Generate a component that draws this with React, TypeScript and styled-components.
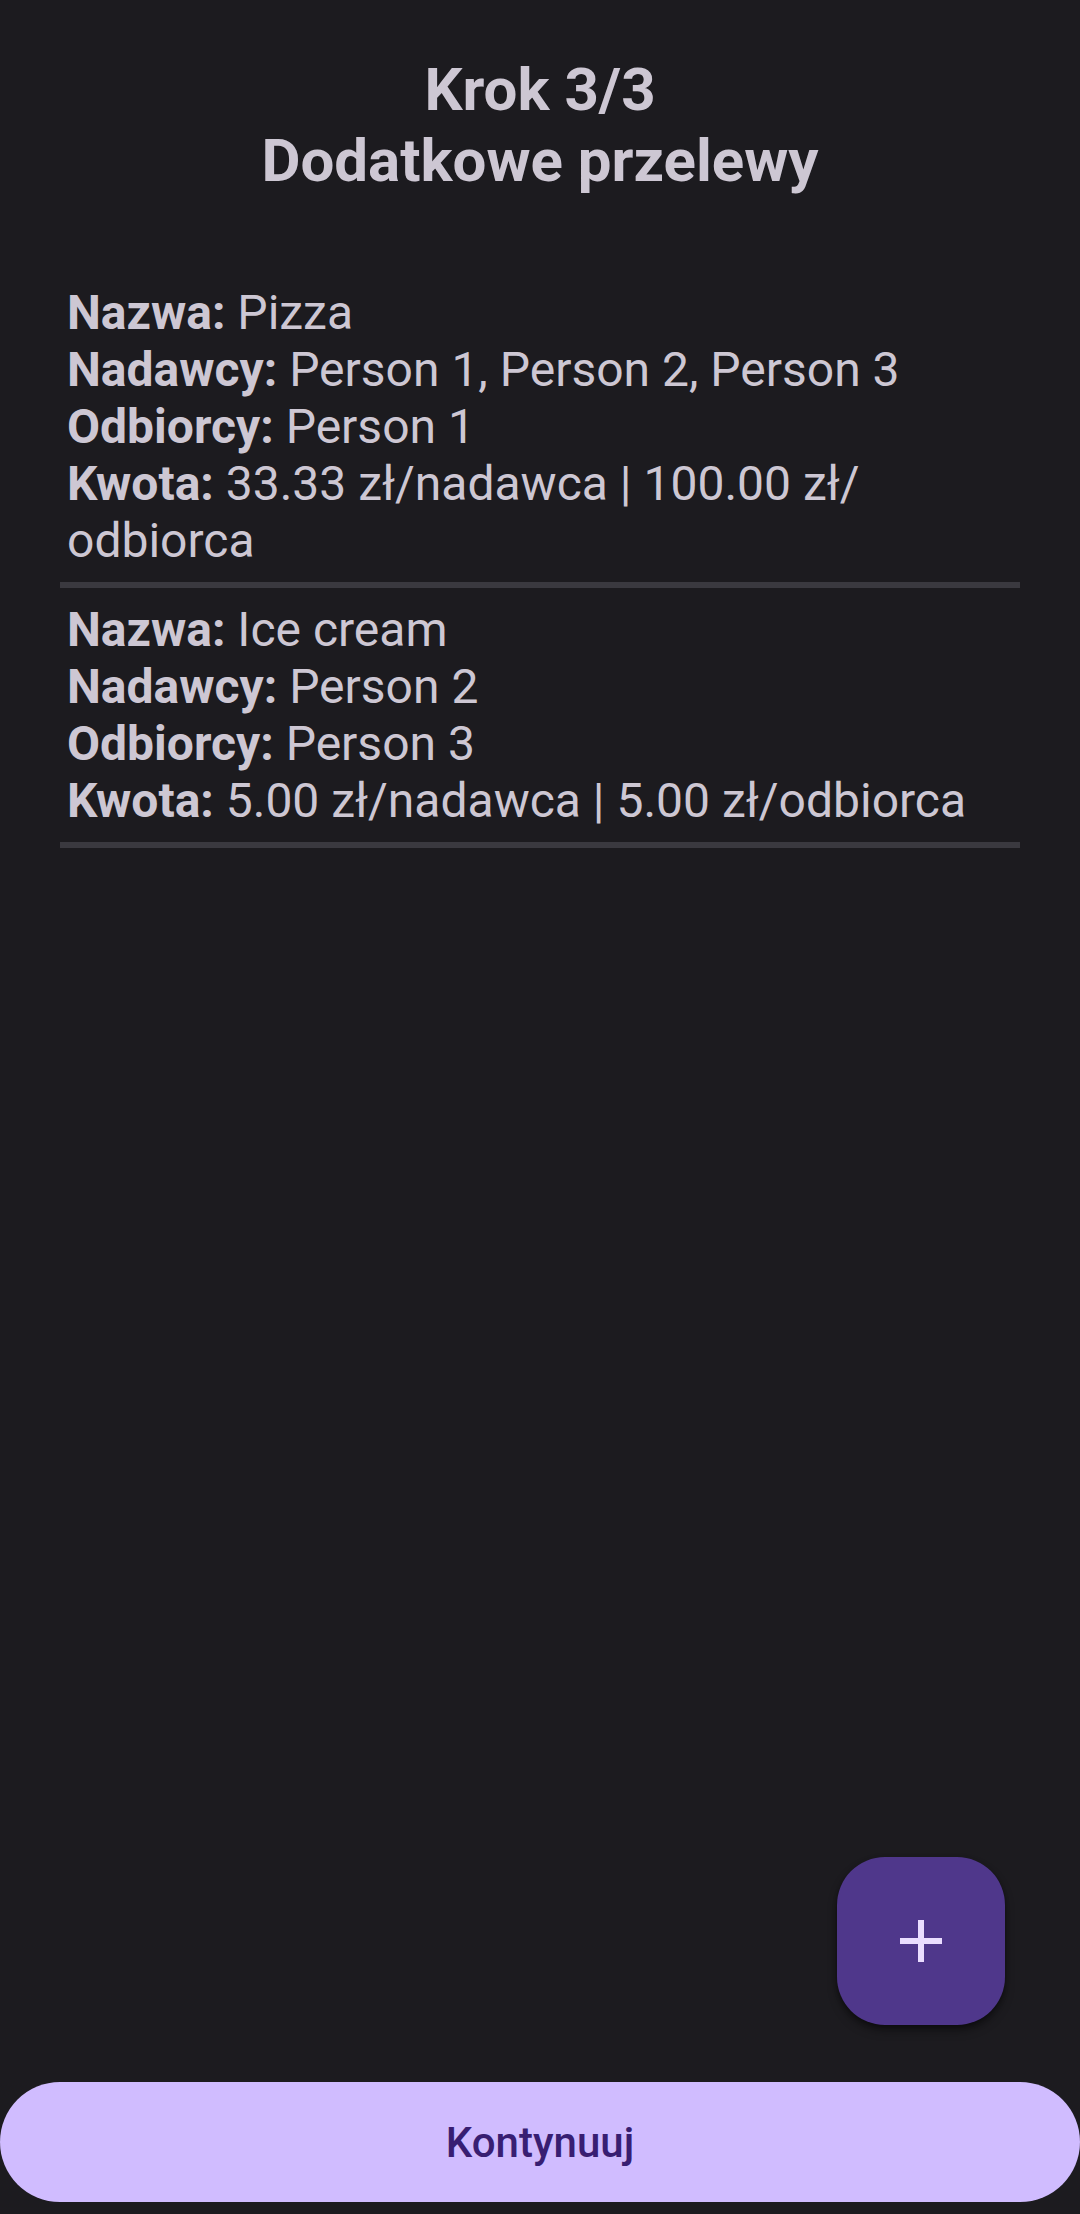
import React from "react";
import styled, { createGlobalStyle } from "styled-components";

const Global = createGlobalStyle`
  html, body { margin: 0; padding: 0; background: #1c1b1f; }
  body { font-family: Roboto, "Noto Sans", sans-serif; }
  #root { min-height: 2214px; }
`;

const Page = styled.div`
  width: 1080px;
  height: 2214px;
  display: flex;
  flex-direction: column;
  background: #1c1b1f;
  color: #cac4d0;
  box-sizing: border-box;
`;

const Title = styled.h1`
  margin: 54px 0 0;
  font-family: Roboto, sans-serif;
  font-weight: 700;
  font-size: 60px;
  line-height: 71px;
  text-align: center;
  color: #cdc7d3;
`;

const List = styled.div`
  margin: 88px 60px 0;
  display: flex;
  flex-direction: column;
`;

const Item = styled.div`
  padding: 0 7px 13px;
  font-size: 48px;
  line-height: 57px;
  color: #cdc7d3;
  border-bottom: 6px solid #3a393f;
  & + & {
    padding-top: 13px;
  }
`;

const Line = styled.div``;

const Label = styled.b`
  font-weight: 700;
`;

const Spacer = styled.div`
  flex: 1;
`;

const FabRow = styled.div`
  display: flex;
  justify-content: flex-end;
  padding-right: 75px;
`;

const Fab = styled.button`
  width: 168px;
  height: 168px;
  border: none;
  border-radius: 48px;
  background: #4f378b;
  display: flex;
  align-items: center;
  justify-content: center;
  box-shadow: 0 6px 10px rgba(0, 0, 0, 0.35), 0 2px 4px rgba(0, 0, 0, 0.3);
  padding: 0;
`;

const Continue = styled.button`
  margin: 57px 0 12px;
  height: 120px;
  width: 1080px;
  border: none;
  border-radius: 60px;
  background: #d0bcff;
  color: #381e72;
  font-family: Roboto, sans-serif;
  font-size: 42px;
  font-weight: 500;
  padding: 0;
`;

type Transfer = { name: string; senders: string; receivers: string; amount: React.ReactNode };

const transfers: Transfer[] = [
  {
    name: "Pizza",
    senders: "Person 1, Person 2, Person 3",
    receivers: "Person 1",
    amount: (
      <>
        33.33 zł/nadawca | 100.00 zł/<wbr />odbiorca
      </>
    ),
  },
  {
    name: "Ice cream",
    senders: "Person 2",
    receivers: "Person 3",
    amount: <>5.00 zł/nadawca | 5.00 zł/odbiorca</>,
  },
];

export default function App() {
  return (
    <>
      <Global />
      <Page>
        <Title>
          Krok 3/3
          <br />
          Dodatkowe przelewy
        </Title>
        <List>
          {transfers.map((t) => (
            <Item key={t.name}>
              <Line>
                <Label>Nazwa:</Label> {t.name}
              </Line>
              <Line>
                <Label>Nadawcy:</Label> {t.senders}
              </Line>
              <Line>
                <Label>Odbiorcy:</Label> {t.receivers}
              </Line>
              <Line>
                <Label>Kwota:</Label> {t.amount}
              </Line>
            </Item>
          ))}
        </List>
        <Spacer />
        <FabRow>
          <Fab aria-label="Dodaj">
            <svg width="72" height="72" viewBox="0 0 24 24">
              <path d="M19 13h-6v6h-2v-6H5v-2h6V5h2v6h6v2z" fill="#eaddff" />
            </svg>
          </Fab>
        </FabRow>
        <Continue>Kontynuuj</Continue>
      </Page>
    </>
  );
}
